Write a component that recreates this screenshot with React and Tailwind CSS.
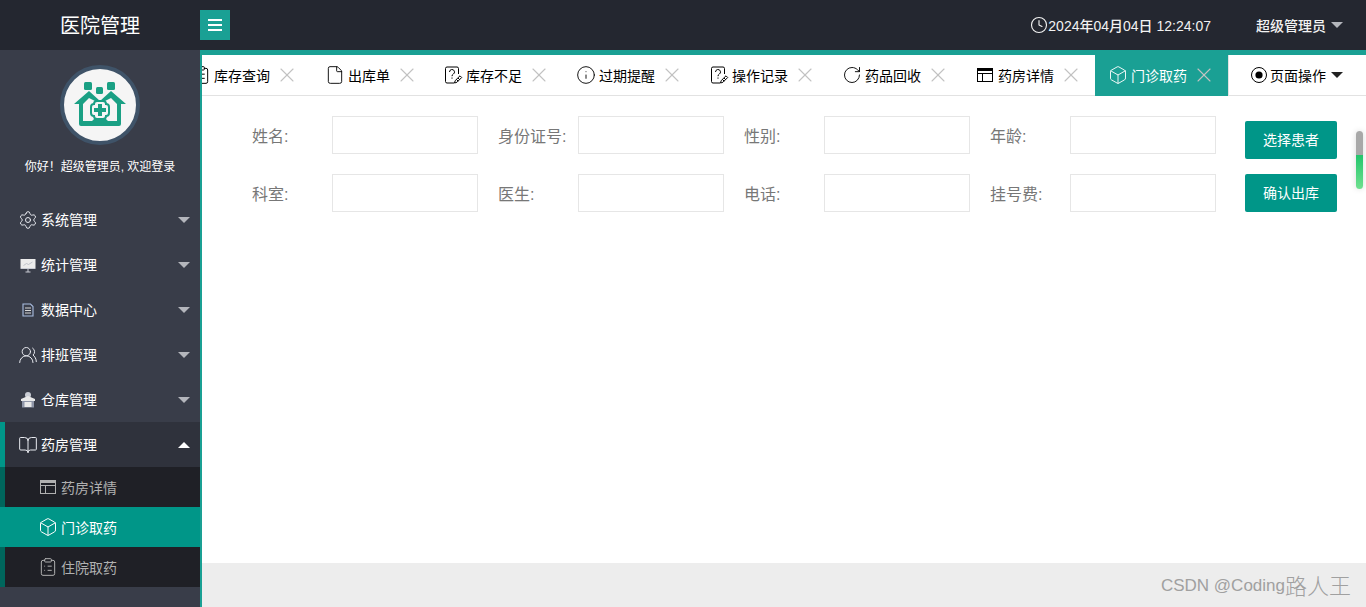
import React from 'react';
import { Box, Clock, File, Info, RotateCw, X, Settings, UsersRound, BookOpen, ClipboardList } from 'lucide-react';

const Caret = ({ up, className }) => (
  <span
    className={`w-0 h-0 border-x-[6px] border-x-transparent ${up ? 'border-b-[6px]' : 'border-t-[6px]'} ${className}`}
  />
);

const PageHelp = ({ className }) => (
  <svg viewBox="0 0 20 20" fill="none" stroke="currentColor" strokeWidth="1" className={className}>
    <path d="M11 18H4a1.5 1.5 0 0 1-1.5-1.5v-13A1.5 1.5 0 0 1 4 2h10a1.5 1.5 0 0 1 1.5 1.5V9" />
    <path d="M6.5 7a2.5 2.5 0 1 1 3.7 2.2c-.8.5-1.2 1-1.2 2M9 12.5v1.2" />
    <path d="M11.5 18l.7-2.4 4.8-4.8 1.7 1.7-4.8 4.8zM13.5 14.5l1.7 1.7M15 13l1.7 1.7" />
  </svg>
);

const WindowIcon = ({ className }) => (
  <svg viewBox="0 0 20 20" fill="none" stroke="currentColor" strokeWidth="1" className={className}>
    <rect x="2.5" y="3.5" width="15" height="13" />
    <path d="M2.5 5h15" strokeWidth="2" />
    <path d="M2.5 8.5h15M7.5 8.5v8" />
  </svg>
);

const StoreIcon = ({ className }) => (
  <svg viewBox="0 0 20 20" className={className}>
    <circle cx="10" cy="5" r="3" fill="#c9ccd4" />
    <path d="M3 9l7-3 7 3v2H3z" fill="#e8e8e8" />
    <path d="M4 11h12v6.5H4z" fill="#8f96a8" />
    <path d="M6.5 12h7v5h-7z" fill="#e8e8e8" />
  </svg>
);

const BoardIcon = ({ className }) => (
  <svg viewBox="0 0 20 20" className={className}>
    <rect x="2.5" y="4" width="15" height="9" fill="#ececec" />
    <path d="M5.5 10.5l3-2 2 1 4-2.5" fill="none" stroke="#b5b8c2" strokeWidth="0.8" />
    <path d="M2.5 13h15v1h-15zM9.5 14h1v3h-1zM7.5 16.5h5v1h-5z" fill="#c9ccd4" />
  </svg>
);

const SheetIcon = ({ className }) => (
  <svg viewBox="0 0 20 20" fill="none" stroke="#a9bde0" strokeWidth="1.1" className={className}>
    <path d="M5 4h7.5L15 6.5V16H5z" />
    <path d="M7 8h6M7 10.5h6M7 13h6" stroke="#d8d8d8" />
  </svg>
);

const TargetIcon = ({ className }) => (
  <svg viewBox="0 0 20 20" className={className}>
    <circle cx="10" cy="10" r="7.5" fill="none" stroke="currentColor" strokeWidth="1" />
    <circle cx="10" cy="10" r="3.6" fill="currentColor" />
  </svg>
);

const Logo = () => (
  <svg viewBox="0 0 54 46" className="w-[54px] h-[46px]">
    <g fill="#1aa084">
      <rect x="11" y="0" width="8" height="8" rx="1.5" />
      <rect x="23" y="5" width="7" height="7" rx="1.5" />
      <rect x="34" y="0" width="8" height="8" rx="1.5" />
      <path d="M16 9l11 10L38 9l15 13h-5v20a2 2 0 0 1-2 2H8a2 2 0 0 1-2-2V22H1z" />
    </g>
    <path d="M16 16l-6 6v17h9l3-3-5-6 2-4 5-2 3-1-3-3zM38 16l6 6v17h-9l-3-3 5-6-2-4-5-2-3-1 3-3z" fill="#f5f5f5" />
    <path d="M21 22a3 3 0 0 1 3-3h6a3 3 0 0 1 3 3 3 3 0 0 1 3 3v6a3 3 0 0 1-3 3 3 3 0 0 1-3 3h-6a3 3 0 0 1-3-3 3 3 0 0 1-3-3v-6a3 3 0 0 1 3-3z" fill="#f5f5f5" stroke="#1aa084" strokeWidth="2" />
    <path d="M25 22h4v4h4v4h-4v4h-4v-4h-4v-4h4z" fill="#1aa084" />
  </svg>
);

const menus = [
  { name: '系统管理', Icon: Settings },
  { name: '统计管理', Icon: BoardIcon },
  { name: '数据中心', Icon: SheetIcon },
  { name: '排班管理', Icon: UsersRound },
  { name: '仓库管理', Icon: StoreIcon },
];

const subMenus = [
  { name: '药房详情', Icon: WindowIcon },
  { name: '门诊取药', Icon: Box, active: true },
  { name: '住院取药', Icon: ClipboardList },
];

const tabs = [
  { name: '出库单', Icon: File },
  { name: '库存不足', Icon: PageHelp },
  { name: '过期提醒', Icon: Info },
  { name: '操作记录', Icon: PageHelp },
  { name: '药品回收', Icon: RotateCw },
  { name: '药房详情', Icon: WindowIcon },
  { name: '门诊取药', Icon: Box, active: true },
];

const rows = [
  ['姓名:', '身份证号:', '性别:', '年龄:'],
  ['科室:', '医生:', '电话:', '挂号费:'],
];

const Sidebar = () => (
  <aside className="w-[200px] shrink-0 bg-[#393d49] text-white overflow-hidden">
    <div className="h-[147px] flex flex-col items-center pt-[15px]">
      <div className="w-[80px] h-[80px] rounded-full border-4 border-[#3f5368] bg-[#f5f5f5] flex items-center justify-center">
        <Logo />
      </div>
      <p className="mt-[13px] text-xs leading-[18px]">你好！超级管理员, 欢迎登录</p>
    </div>
    {menus.map(({ name, Icon }) => (
      <div key={name} className="h-[45px] flex items-center pl-5 pr-[10px]">
        <Icon className="w-5 h-5 -mx-[2px] text-[#e8eaf0]" strokeWidth={1.2} />
        <span className="ml-[5px] text-sm">{name}</span>
        <Caret className="ml-auto border-t-[#b4b6bc]" />
      </div>
    ))}
    <div className="h-[45px] flex items-center pl-[15px] pr-[10px] bg-[#2f323c] border-l-[5px] border-[#009688]">
      <BookOpen className="w-5 h-5 -mx-[2px] text-[#e8eaf0]" strokeWidth={1.2} />
      <span className="ml-[5px] text-sm">药房管理</span>
      <Caret up className="ml-auto border-b-white" />
    </div>
    {subMenus.map(({ name, Icon, active }) => (
      <div
        key={name}
        className={`h-10 flex items-center pl-[35px] border-l-[5px] ${active ? 'bg-[#009688] border-[#009688] text-white' : 'bg-[#1f2026] border-[#00665c] text-[#b0b0b0]'}`}
      >
        <Icon className="w-5 h-5 -mx-[2px]" strokeWidth={1.2} />
        <span className="ml-[5px] pt-[2px] text-sm">{name}</span>
      </div>
    ))}
  </aside>
);

const TabBar = () => (
  <div className="h-[41px] shrink-0 flex overflow-hidden text-black text-sm bg-white">
    <div className="w-[110px] shrink-0 flex items-center border-b border-[#e2e2e2]">
      <ClipboardList className="w-5 h-5 shrink-0 -ml-[11px] mr-[3px]" strokeWidth={1.2} />
      <span className="pt-[2px] whitespace-nowrap">库存查询</span>
      <X className="w-6 h-6 ml-[5px] shrink-0 text-[#c2c2c2]" strokeWidth={1.1} />
    </div>
    {tabs.map(({ name, Icon, active }) => (
      <div
        key={name}
        className={`shrink-0 flex items-center pl-[15px] border-b ${name === '出库单' ? 'w-[118px]' : 'w-[133px]'} ${active ? 'bg-[#1aa094] border-[#1aa094] text-white' : 'border-[#e2e2e2]'}`}
      >
        <Icon className="w-5 h-5 -mx-[2px] shrink-0" strokeWidth={1.1} />
        <span className="ml-[5px] pt-[2px] whitespace-nowrap">{name}</span>
        <X className="w-6 h-6 ml-[5px] shrink-0 text-[#c2c2c2]" strokeWidth={1.1} />
      </div>
    ))}
    <div className="flex-1 flex items-center pl-[22px] border-l border-b border-[#e2e2e2]">
      <TargetIcon className="w-5 h-5 -mx-[2px] shrink-0" />
      <span className="ml-[3px] pt-[1px] whitespace-nowrap">页面操作</span>
      <Caret className="ml-[5px] border-t-[#222]" />
    </div>
  </div>
);

const PatientForm = () => (
  <div className="flex pl-[50px] pt-5 relative">
    <div className="flex flex-col gap-5 w-[984px]">
      {rows.map((row, i) => (
        <div key={i} className="flex">
          {row.map((label) => (
            <div key={label} className="w-[246px] flex items-center">
              <label className="w-[80px] pt-1 text-base text-[#777]">{label}</label>
              <input className="w-[146px] h-[38px] border border-[#e6e6e6] bg-white" />
            </div>
          ))}
        </div>
      ))}
    </div>
    <div className="w-[92px] ml-[9px] pt-[5px] flex flex-col gap-[15px]">
      <button className="h-[38px] rounded-[2px] bg-[#009688] text-white text-sm">选择患者</button>
      <button className="h-[38px] rounded-[2px] bg-[#009688] text-white text-sm">确认出库</button>
    </div>
    {/* scrollbar thumb */}
    <div className="absolute left-[1154px] top-[35px] w-[7px] h-[58px] rounded bg-[linear-gradient(#a8a8a8_0,#a8a8a8_41%,#22c56c_41%,#6fe08f_100%)] shadow-[0_0_6px_rgba(0,0,0,0.15)]" />
  </div>
);

export default function App() {
  return (
    <div className="w-[1366px] h-[607px] flex flex-col overflow-hidden bg-white font-['Liberation_Sans','Noto_Sans_CJK_SC',sans-serif]">
      <header className="h-[50px] shrink-0 bg-[#242730] flex items-center text-white">
        <div className="w-[200px] pt-[2px] text-center text-xl">医院管理</div>
        <button className="w-[30px] h-[30px] bg-[#1aa094] flex items-center justify-center">
          <svg viewBox="0 0 14 12" className="w-[14px] h-[12px]" fill="white">
            <rect y="0" width="14" height="2" />
            <rect y="5" width="14" height="2" />
            <rect y="10" width="14" height="2" />
          </svg>
        </button>
        <div className="ml-auto flex items-center text-sm font-medium text-[#f2f2f2]">
          <Clock className="w-[18px] h-[18px] -mx-[1px]" strokeWidth={1.5} />
          <span className="pt-[2px] ml-px">2024年04月04日 12:24:07</span>
          <span className="ml-[45px] pt-[1px]">超级管理员</span>
          <Caret className="ml-[5px] mr-[23px] border-t-[#b4b6bc]" />
        </div>
      </header>
      <div className="flex-1 flex min-h-0">
        <Sidebar />
        <main className="flex-1 min-w-0 flex flex-col border-l-2 border-[#1aa094]">
          <div className="h-[5px] shrink-0 bg-[#1aa094]" />
          <TabBar />
          <div className="flex-1 bg-white">
            <PatientForm />
          </div>
          <footer className="h-11 shrink-0 bg-[#ededed] flex items-center justify-end pr-[15px] pt-[2px] text-[17px] text-[#a0a0a0]">
            CSDN @Coding<span className="text-[22px] font-light">路人王</span>
          </footer>
        </main>
      </div>
    </div>
  );
}
